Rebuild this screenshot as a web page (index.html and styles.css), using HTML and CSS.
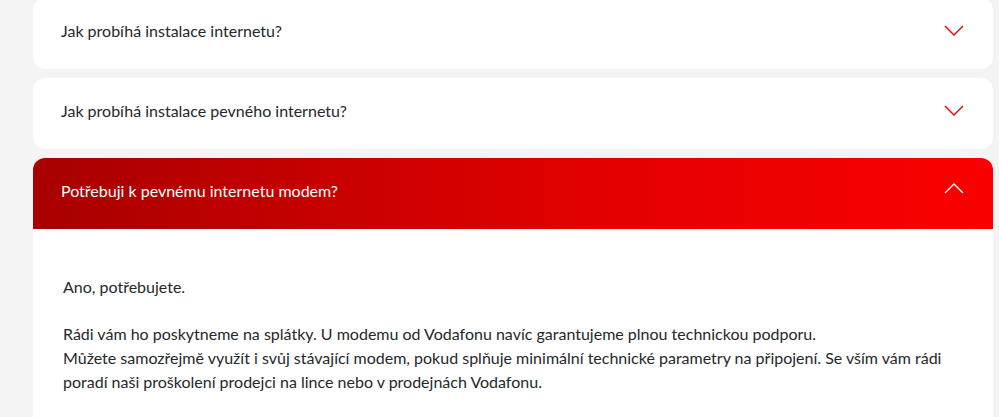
FILE: index.html
```html
<!DOCTYPE html>
<html lang="cs">
<head>
<meta charset="utf-8">
<link rel="stylesheet" href="styles.css">
</head>
<body>
<div class="faq">
  <div class="item">
    <div class="head">
      <span class="q">Jak probíhá instalace internetu?</span>
      <svg class="chev" width="20" height="11" viewBox="0 0 20 11"><polyline points="1,1 10,10 19,1" fill="none" stroke="#e60000" stroke-width="1.4"/></svg>
    </div>
  </div>
  <div class="item">
    <div class="head">
      <span class="q">Jak probíhá instalace pevného internetu?</span>
      <svg class="chev" width="20" height="11" viewBox="0 0 20 11"><polyline points="1,1 10,10 19,1" fill="none" stroke="#e60000" stroke-width="1.4"/></svg>
    </div>
  </div>
  <div class="item open">
    <div class="head">
      <span class="q">Potřebuji k pevnému internetu modem?</span>
      <svg class="chev" width="20" height="11" viewBox="0 0 20 11"><polyline points="1,10 10,1 19,10" fill="none" stroke="#ffffff" stroke-width="1.4"/></svg>
    </div>
    <div class="body">
      <p>Ano, potřebujete.</p>
      <p>Rádi vám ho poskytneme na splátky. U modemu od Vodafonu navíc garantujeme plnou technickou podporu.<br>Můžete samozřejmě využít i svůj stávající modem, pokud splňuje minimální technické parametry na připojení. Se vším vám rádi poradí naši proškolení prodejci na lince nebo v prodejnách Vodafonu.</p>
    </div>
  </div>
</div>
</body>
</html>
```
FILE: styles.css
```css
html, body {
  margin: 0;
  padding: 0;
  background: #f4f4f4;
  font-family: Lato, "Liberation Sans", sans-serif;
  color: #25282b;
  overflow: hidden;
}
.faq {
  width: 960px;
  margin-left: 33px;
  margin-top: -2px;
  display: flex;
  flex-direction: column;
  gap: 9px;
}
.item {
  background: #fff;
  border-radius: 12px;
  overflow: hidden;
}
.head {
  height: 71px;
  padding: 0 29px 0 28px;
  display: flex;
  align-items: center;
  justify-content: space-between;
  box-sizing: border-box;
}
.q {
  font-size: 16px;
  line-height: 24px;
  margin-top: -6px;
}
.chev {
  display: block;
  margin-top: -6px;
}
.open .head {
  background: linear-gradient(90deg, #a80000 0%, #e00000 55%, #fb0000 100%);
  color: #fff;
}
.open .head .chev {
  margin-top: -10px;
}
.body {
  padding: 46px 30px 30px;
  font-size: 16px;
  line-height: 24px;
}
.body p {
  margin: 0 0 23px;
}
```
